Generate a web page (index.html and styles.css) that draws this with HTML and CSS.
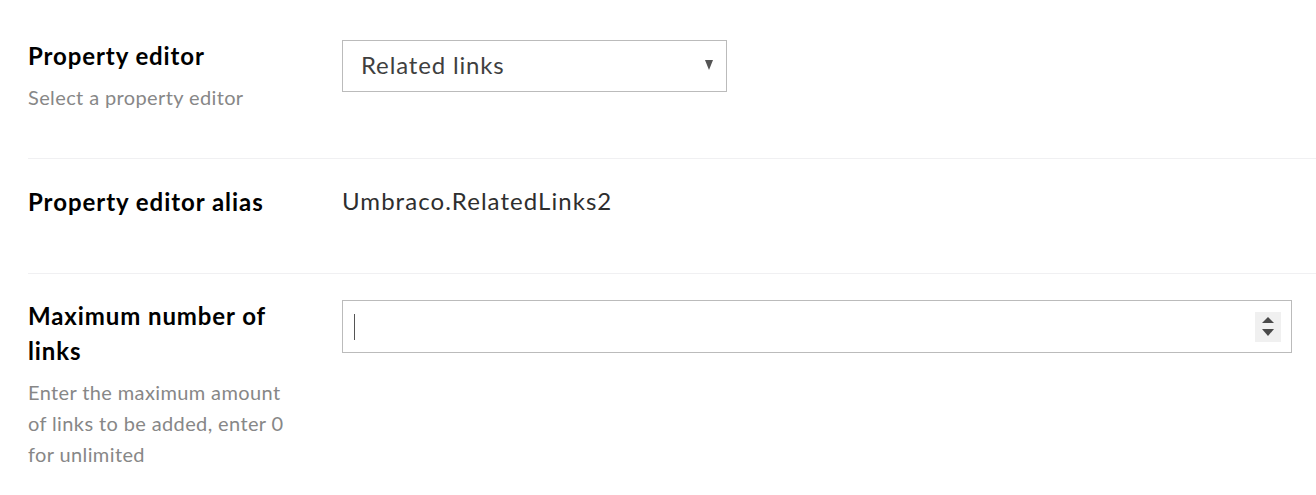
FILE: index.html
```html
<!DOCTYPE html>
<html lang="en">
<head>
<meta charset="utf-8">
<title>Data type settings</title>
<link rel="stylesheet" href="styles.css">
</head>
<body>
<div class="page">
  <div class="row row-first">
    <div class="label-col">
      <div class="label">Property editor</div>
      <div class="desc">Select a property editor</div>
    </div>
    <div class="editor-col editor-select">
      <div class="select">
        <span class="select-text">Related links</span>
        <svg class="select-arrow" width="8" height="10" viewBox="0 0 8 10"><polygon points="0,0 8,0 4,10" fill="#555"/></svg>
      </div>
    </div>
  </div>
  <div class="row row-alias">
    <div class="label-col">
      <div class="label label-alias">Property editor alias</div>
    </div>
    <div class="editor-col">
      <div class="alias">Umbraco.RelatedLinks2</div>
    </div>
  </div>
  <div class="row row-last">
    <div class="label-col">
      <div class="label">Maximum number of links</div>
      <div class="desc">Enter the maximum amount of links to be added, enter 0 for unlimited</div>
    </div>
    <div class="editor-col editor-input">
      <div class="number-input">
        <span class="caret"></span>
        <span class="spinner">
          <svg width="12" height="19" viewBox="0 0 12 19"><polygon points="6,0 12,6 0,6" fill="#4a4a4a"/><polygon points="0,12 12,12 6,19" fill="#4a4a4a"/></svg>
        </span>
      </div>
    </div>
  </div>
</div>
</body>
</html>
```

FILE: styles.css
```css
html, body {
  margin: 0;
  padding: 0;
  background: #ffffff;
}
body {
  font-family: Lato, "Open Sans", sans-serif;
  color: #000;
  width: 1316px;
  height: 495px;
  overflow: hidden;
}
.page {
  padding: 10px 0 0 28px;
}
.row {
  display: flex;
}
.row + .row {
  border-top: 1px solid #f0f0f2;
}
.row-first {
  padding-top: 28px;
  padding-bottom: 45px;
}
.row-alias {
  padding-top: 25px;
  padding-bottom: 54px;
}
.row-last {
  padding-top: 24px;
}
.label-col {
  width: 266px;
  flex: none;
  margin-right: 48px;
}
.label {
  font-size: 24px;
  font-weight: 700;
  line-height: 35px;
  letter-spacing: 0.9px;
  color: #000;
}
.label-alias {
  letter-spacing: 0.95px;
}
.desc {
  margin-top: 9px;
  font-size: 20px;
  line-height: 31px;
  letter-spacing: 0.38px;
  color: #878787;
}
.editor-col {
  flex: 1;
}
.editor-select {
  padding-top: 2px;
}
.editor-input {
  padding-top: 2px;
}
.select {
  box-sizing: border-box;
  width: 385px;
  height: 52px;
  border: 1px solid #bbbbbb;
  display: flex;
  align-items: center;
  justify-content: space-between;
  padding: 0 13px 3px 18px;
  color: #3f3f3f;
}
.select-text {
  font-size: 24px;
  line-height: 30px;
  letter-spacing: 0.85px;
}
.select-arrow {
  display: block;
  margin-top: 1px;
}
.alias {
  font-size: 24px;
  line-height: 33px;
  letter-spacing: 1.05px;
  color: #2e2e2e;
}
.number-input {
  box-sizing: border-box;
  width: 950px;
  height: 53px;
  border: 1px solid #bbbbbb;
  display: flex;
  align-items: center;
  justify-content: space-between;
  padding: 0 10px 0 11px;
}
.caret {
  display: block;
  width: 1px;
  height: 26px;
  background: #555;
  margin-top: 1px;
}
.spinner {
  width: 26px;
  height: 30px;
  background: #f0f0f0;
  display: flex;
  align-items: center;
  justify-content: center;
}
.spinner svg {
  display: block;
}
```
